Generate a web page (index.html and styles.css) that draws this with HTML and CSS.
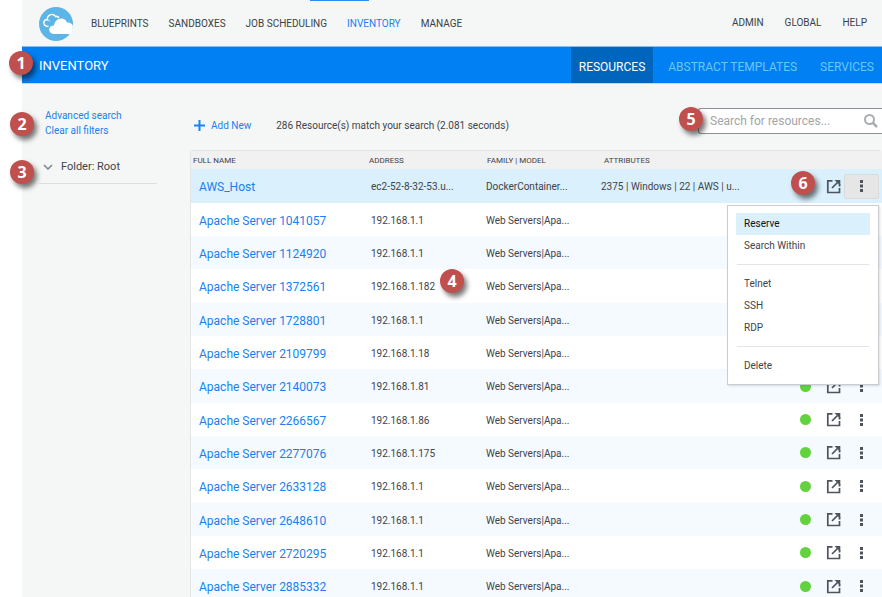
FILE: index.html
```html
<!DOCTYPE html>
<html lang="en">
<head>
<meta charset="utf-8">
<title>Inventory</title>
<link rel="stylesheet" href="styles.css">
</head>
<body>
<svg class="sprite" aria-hidden="true">
  <symbol id="open" viewBox="0 0 15 15">
    <path d="M6.500 1.800H1.800v11.700h11.700V9M13.500 7.500V5" fill="none" stroke="#4f545c" stroke-width="1.700"/>
    <path d="M6 9l5.500-5.500" fill="none" stroke="#4f545c" stroke-width="1.700"/>
    <path d="M8.500 1H14.300v5.800z" fill="#4f545c"/>
  </symbol>
  <symbol id="more" viewBox="0 0 3 12">
    <path d="M0 0h3v3H0zM0 4.500h3v3H0zM0 9h3v3H0z" fill="#4f545c"/>
  </symbol>
</svg>
<div class="app">
  <header class="top">
    <a class="logo" href="#" aria-label="Home">
      <svg viewBox="0 0 34 34" width="34" height="34">
        <circle cx="17" cy="17" r="17" fill="#5cb5e6"/>
        <path d="M9.500 19.500c-3.500 0-5.500-2.500-4.500-5 .5-1.500 2-2 3.200-1.800C8 9.500 10.500 7 13.500 7.500c1.500.3 2.500 1 3 2 2-.4 3 .3 3.300 1.500" fill="none" stroke="#fff" stroke-width="1.500"/>
        <path d="M8.500 13c1.300 0 2 .6 2.300 1.400" fill="none" stroke="#fff"/>
        <path d="M15.500 27c-7 0-7-8.500-.5-8.500.5-4 3.500-7 7-7 3 0 5 1.500 6 4 3-.5 5 1 5.800 3C33.800 22 33 24.500 31.500 27z" fill="#fff"/>
      </svg>
    </a>
    <nav class="nav">
      <a href="#">BLUEPRINTS</a>
      <a href="#">SANDBOXES</a>
      <a href="#">JOB SCHEDULING</a>
      <a href="#" class="current">INVENTORY</a>
      <a href="#">MANAGE</a>
    </nav>
    <nav class="nav user">
      <a href="#">ADMIN</a>
      <a href="#">GLOBAL</a>
      <a href="#">HELP</a>
    </nav>
  </header>
  <div class="bar">
    <h1>INVENTORY</h1>
    <nav class="tabs">
      <a href="#" class="active">RESOURCES</a>
      <a href="#">ABSTRACT TEMPLATES</a>
      <a href="#">SERVICES</a>
    </nav>
    <span class="badge b1">1</span>
  </div>
  <div class="body">
    <aside class="side">
      <div class="filters">
        <a href="#">Advanced search</a>
        <a href="#">Clear all filters</a>
        <span class="badge b2">2</span>
      </div>
      <button class="folder" type="button">
        <svg viewBox="0 0 10 6" width="10" height="6"><path d="M1 1l4 4 4-4" fill="none" stroke="#7d848b" stroke-width="1.500"/></svg>
        Folder: Root
        <span class="badge b3">3</span>
      </button>
    </aside>
    <main class="main">
      <div class="tools">
        <button class="add" type="button">
          <svg viewBox="0 0 11 11" width="11" height="11"><path d="M5.500 0v11M0 5.500h11" stroke="#1a84f0" stroke-width="2"/></svg>
          Add New
        </button>
        <p class="count">286 Resource(s) match your search (2.081 seconds)</p>
        <div class="search">
          <input type="text" aria-label="Search for resources" placeholder="Search for resources...">
          <svg viewBox="0 0 14 14" width="14" height="14"><circle cx="5.500" cy="5.500" r="4.500" fill="none" stroke="#a9adb2" stroke-width="2"/><path d="M9 9l4 4" stroke="#a9adb2" stroke-width="2.500"/></svg>
          <span class="badge b5">5</span>
        </div>
      </div>
      <table class="grid">
        <colgroup><col class="c-name"><col class="c-addr"><col class="c-fam"><col><col class="c-act"></colgroup>
        <thead><tr><th>FULL NAME</th><th>ADDRESS</th><th>FAMILY | MODEL</th><th>ATTRIBUTES</th><th></th></tr></thead>
        <tbody id="rows">
          <tr class="selected">
            <td><a href="#">AWS_Host</a></td><td>ec2-52-8-32-53.u...</td><td>DockerContainer...</td><td>2375 | Windows | 22 | AWS | u...</td>
            <td><div class="actions">
              <button type="button" class="open" aria-label="Open"><svg><use href="#open"/></svg></button>
              <button type="button" class="more" aria-label="More"><svg><use href="#more"/></svg></button>
              <div class="menu">
                <button type="button" class="hot">Reserve</button>
                <button type="button">Search Within</button>
                <hr>
                <button type="button">Telnet</button>
                <button type="button">SSH</button>
                <button type="button">RDP</button>
                <hr>
                <button type="button">Delete</button>
              </div>
              <span class="badge b6">6</span>
            </div></td>
          </tr>
        </tbody>
      </table>
    </main>
  </div>
</div>
<script src="rows.js"></script>
</body>
</html>
```
FILE: rows.js
```js
const servers = [
  ["1041057", "192.168.1.1"],
  ["1124920", "192.168.1.1"],
  ["1372561", "192.168.1.182", '<span class="badge b4">4</span>'],
  ["1728801", "192.168.1.1"],
  ["2109799", "192.168.1.18"],
  ["2140073", "192.168.1.81"],
  ["2266567", "192.168.1.86"],
  ["2277076", "192.168.1.175"],
  ["2633128", "192.168.1.1"],
  ["2648610", "192.168.1.1"],
  ["2720295", "192.168.1.1"],
  ["2885332", "192.168.1.1"]
];
document.getElementById("rows").insertAdjacentHTML("beforeend", servers.map(([id, ip, note = ""]) => `
  <tr>
    <td><a href="#">Apache Server ${id}</a></td><td>${ip}${note}</td><td>Web Servers|Apa...</td><td></td>
    <td><div class="actions">
      <span class="dot"></span>
      <button type="button" class="open" aria-label="Open"><svg><use href="#open"/></svg></button>
      <button type="button" class="more" aria-label="More"><svg><use href="#more"/></svg></button>
    </div></td>
  </tr>`).join(""));
```
FILE: styles.css
```css
* { box-sizing: border-box; }
body {
  margin: 0;
  height: 100vh;
  overflow: hidden;
  background: #fff;
  color: #3f4348;
  font: 10px/16px Roboto, "Liberation Sans", sans-serif;
}
a { color: #1a7ff0; text-decoration: none; }
button {
  border: 0;
  padding: 0;
  background: none;
  color: inherit;
  font: inherit;
  text-align: left;
}
.sprite { position: absolute; width: 0; height: 0; }
.app { margin-left: 22px; min-height: 100vh; background: #f5f7f6; }

.top {
  position: relative;
  display: flex;
  align-items: center;
  height: 46px;
  padding: 0 15px 0 17px;
}
.top::before {
  content: "";
  position: absolute;
  top: 0;
  left: 288px;
  width: 59px;
  height: 1px;
  background: #2b8df0;
}
.logo { display: flex; margin-right: 18px; padding-top: 2px; }
.nav { display: flex; gap: 20px; padding-top: 1px; }
.nav a { color: #3c4045; }
.nav .current { color: #1a7ff0; }
.user { gap: 21px; margin-left: auto; padding: 0; }

.bar {
  position: relative;
  display: flex;
  justify-content: space-between;
  height: 38px;
  padding-left: 17px;
  border-top: 1px solid #7fbdf5;
  border-bottom: 1px solid #b9dcfa;
  background: #0080f2;
}
h1 { margin: 0; color: #fff; font-size: 13px; font-weight: 400; line-height: 38px; }
.tabs { display: flex; font-size: 12px; line-height: 40px; }
.tabs a { padding: 0 8px; color: #6fc6ff; }
.tabs a + a { margin-left: 7px; }
.tabs .active { background: #0065bd; color: #fff; }

.body { display: flex; }
.side { width: 168px; padding: 24px 33px 0 17px; }
.filters { position: relative; display: flex; flex-direction: column; padding-left: 6px; line-height: 15px; }
.folder {
  position: relative;
  display: flex;
  align-items: center;
  gap: 8px;
  width: 100%;
  height: 34px;
  margin-top: 12px;
  padding-left: 4px;
  border-bottom: 1px solid #dcdedd;
  font-size: 11px;
}
.main { flex: 1; min-width: 0; }
.tools { display: flex; height: 66px; padding: 24px 0 0 4px; }
.add { display: flex; align-items: center; gap: 6px; height: 35px; color: #1a7ff0; }
.count { margin: 0 0 0 25px; line-height: 35px; }
.search {
  position: relative;
  display: flex;
  align-items: center;
  width: 184px;
  height: 26px;
  margin-left: auto;
  padding-right: 4px;
  border: solid #8d9197;
  border-width: 1px 0 1px 1px;
  border-radius: 3px 0 0 3px;
  background: #fff;
}
.search input {
  flex: 1;
  min-width: 0;
  padding: 0 0 0 11px;
  border: 0;
  outline: 0;
  background: none;
  font: 12px Roboto, "Liberation Sans", sans-serif;
}
.search input::placeholder { color: #a2a5a8; }

.grid {
  width: 100%;
  table-layout: fixed;
  border: solid #e3e5e5;
  border-width: 1px 0 0 1px;
  border-radius: 3px 3px 0 0;
  border-spacing: 0;
  background: #fff;
}
.c-name { width: 178px; }
.c-addr { width: 117px; }
.c-fam { width: 115px; }
.c-act { width: 96px; }
th { height: 18px; padding: 1px 0 0 2px; background: #f1f1f1; font-size: 8px; font-weight: 400; line-height: 17px; text-align: left; }
th:nth-child(2) { padding-left: 0; }
th:nth-child(3) { padding-left: 1px; }
th:nth-child(4) { padding-left: 3px; }
td { position: relative; height: 33px; padding: 2px 0 0; white-space: nowrap; }
td:last-child { padding-top: 0; }
tr:nth-child(3n+1) td { height: 34px; }
tbody tr:nth-child(odd) { background: #f4faff; }
tbody tr.selected { background: #daf0fc; }
td:first-child { padding-left: 8px; font-size: 12px; }
td:nth-child(2) { padding-left: 2px; }

.actions { position: relative; display: flex; align-items: center; justify-content: flex-end; padding-right: 3px; }
.dot { width: 11px; height: 11px; margin-right: 15px; border-radius: 50%; background: #62d33d; }
.open { display: flex; margin-right: 3px; }
.open svg { width: 15px; height: 15px; }
.more { display: flex; align-items: center; justify-content: center; width: 35px; height: 25px; }
.more svg { width: 3px; height: 12px; }
.selected .more { border: 1px solid #d8dadb; border-radius: 2px; background: #e6e6e6; }
.menu {
  position: absolute;
  z-index: 2;
  top: 31px;
  right: 3px;
  width: 152px;
  padding: 7px 8px;
  border: 1px solid #c9cdd1;
  background: #fff;
  box-shadow: 1px 1px 2px #0002;
}
.menu button { display: block; width: 100%; height: 22px; padding-left: 8px; }
.menu .hot { background: #daf0fc; color: #111; }
.menu hr { height: 1px; margin: 7px 1px 8px; border: 0; background: #e2e4e5; }

.badge {
  position: absolute;
  z-index: 3;
  width: 24px;
  height: 24px;
  border-radius: 50%;
  background: #c0504d;
  box-shadow: 3px 4px 5px #0008;
  color: #fff;
  font: 700 16px/24px "Open Sans", "Noto Sans", sans-serif;
  text-align: center;
}
.b1 { left: -13px; top: 4px; }
.b2 { left: -29px; top: 4px; }
.b3 { left: -29px; top: 10px; }
.b4 { left: 71px; top: 0; }
.b5 { left: -20px; top: -2px; }
.b6 { right: 67px; top: -3px; }
```
